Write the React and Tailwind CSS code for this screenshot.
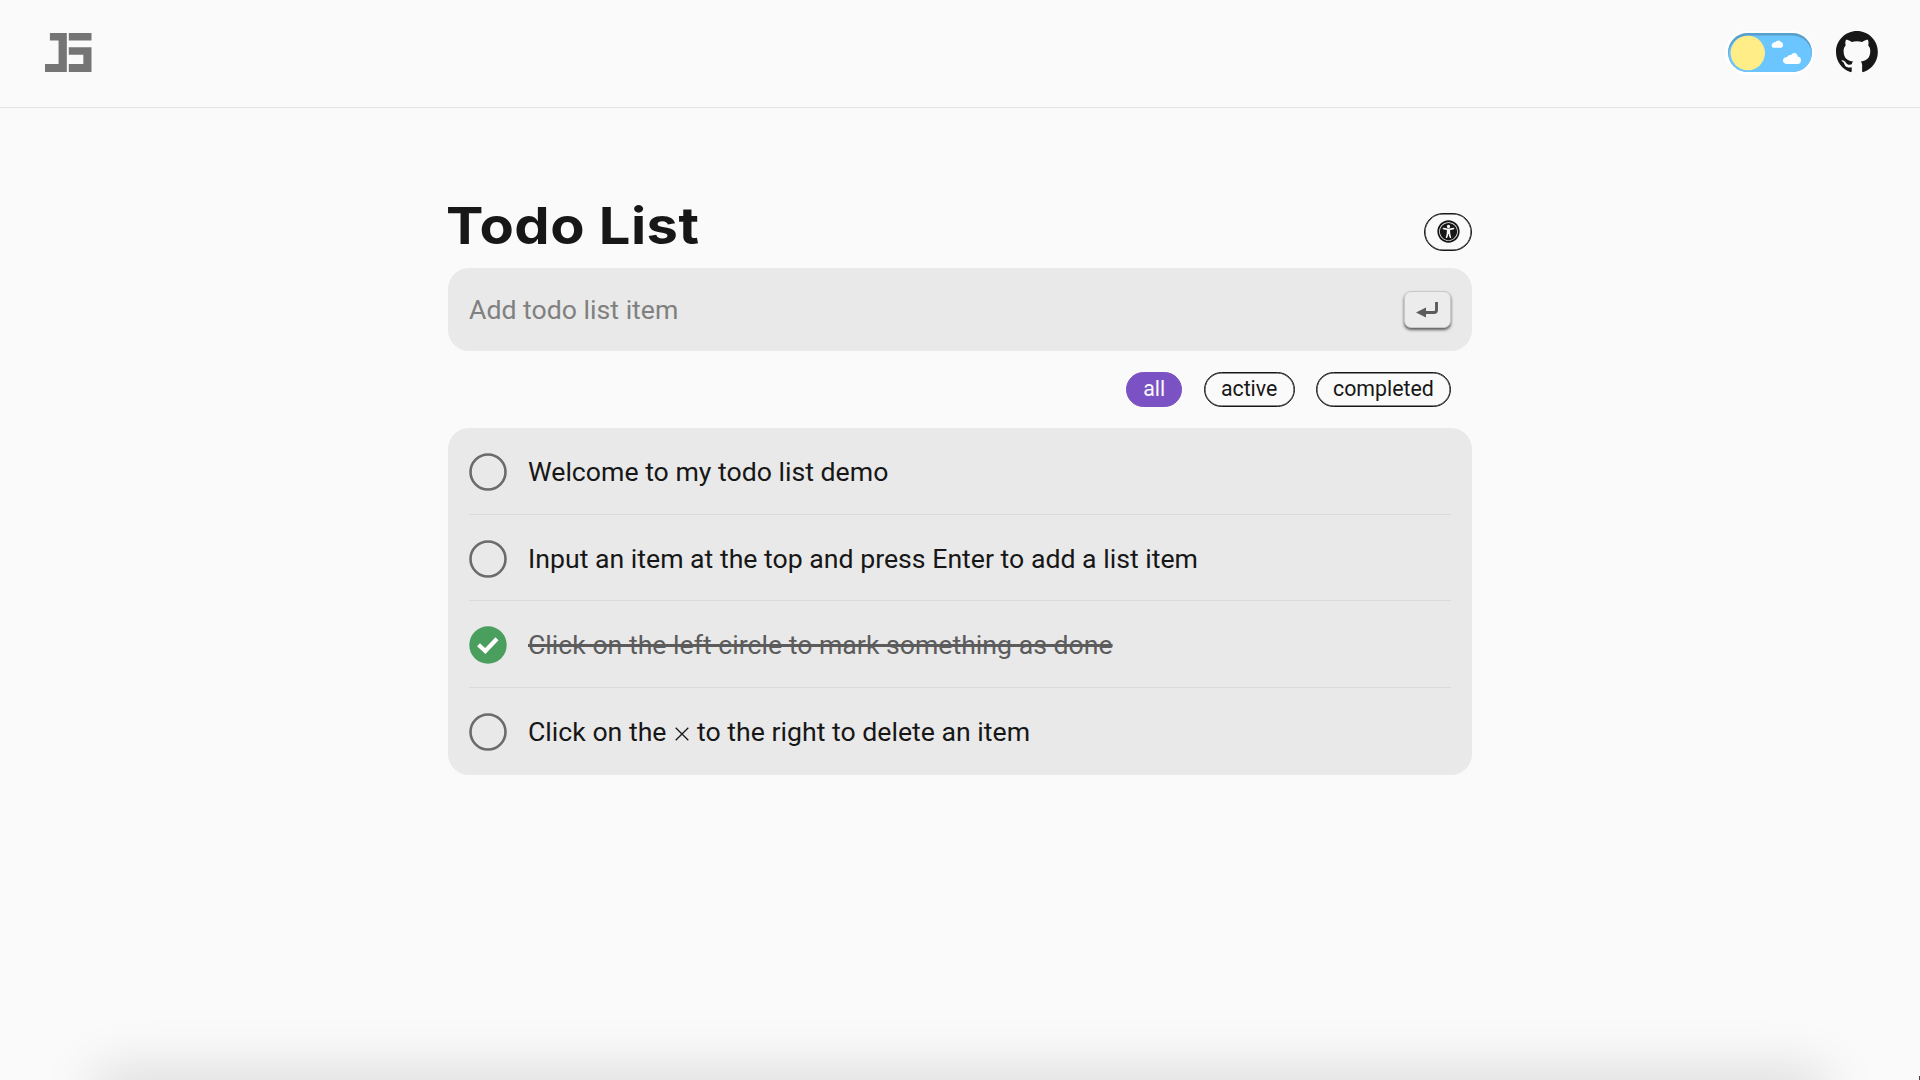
import { useState } from "react";
import { FaUniversalAccess } from "react-icons/fa";

const initialItems = [
  { id: 1, text: "Welcome to my todo list demo", done: false },
  { id: 2, text: "Input an item at the top and press Enter to add a list item", done: false },
  { id: 3, text: "Click on the left circle to mark something as done", done: true },
  { id: 4, text: "Click on the ", tail: " to the right to delete an item", done: false },
];

function Logo() {
  return (
    <svg className="-mt-[2px] h-[39px] w-[46.5px]" viewBox="0 0 47.3 39.6" preserveAspectRatio="none" fill="#757575">
      <path d="M5 0H22.2V39.6H0V31.6H13.8V7.5H5Z" />
      <path d="M24.2 0H47.3V7.5H24.2ZM24.2 14.5H47.3V39.6H24.2V31.6H39V22.2H24.2Z" />
    </svg>
  );
}

function ThemeSwitch() {
  return (
    <button aria-label="Toggle theme" className="-mt-[2px] block">
      <svg className="h-[46px] w-[90px]" viewBox="0 0 90 46">
        <defs>
          <clipPath id="track">
            <rect x="3" y="3" width="84" height="39" rx="19.5" />
          </clipPath>
        </defs>
        <rect x="0" y="1" width="89" height="44" rx="22" fill="#fff" />
        <g clipPath="url(#track)">
          <rect x="3" y="3" width="84" height="39" fill="#5a9fcb" />
          <rect x="3.3" y="5.4" width="83.7" height="42" rx="20" fill="#6bc5ff" />
        </g>
        <circle cx="22.8" cy="23" r="17.2" fill="#ffed87" />
        <path fill="#fff" d="M48.2 17.8a2.5 2.5 0 0 1 0-4.7c.8-.3 1.3 0 1.8-.5.6-1.1 1.7-.8 2.1-1.5 1.1-1.2 3.3-.7 3.6 1.2 1.5-.3 2.4.9 2.2 2.5.4 1.6-.5 3-1.9 3Z" />
        <path fill="#fff" d="M61.5 34c-4.6-.2-5-6.9 1-7.2.6-1.8 2.6-2 3.6-1.7 1.7-3.3 6.2-2.5 6.6 1.3 2.6.2 3.4 2 3.2 4.1 0 2.3-1.1 3.5-3.2 3.5Z" />
      </svg>
    </button>
  );
}

function GithubMark() {
  return (
    <svg className="h-[42px] w-[42px]" viewBox="0 0 98 98" fill="#171717">
      <path d="M48.854 0C21.839 0 0 22 0 49.217c0 21.756 13.993 40.172 33.405 46.69 2.427.49 3.316-1.059 3.316-2.362 0-1.141-.08-5.052-.08-9.127-13.59 2.934-16.42-5.867-16.42-5.867-2.184-5.704-5.42-7.17-5.42-7.17-4.448-3.015.324-3.015.324-3.015 4.934.326 7.523 5.052 7.523 5.052 4.367 7.496 11.404 5.378 14.235 4.074.404-3.178 1.699-5.378 3.074-6.6-10.839-1.141-22.243-5.378-22.243-24.283 0-5.378 1.94-9.778 5.014-13.2-.485-1.222-2.184-6.275.486-13.038 0 0 4.125-1.304 13.426 5.052a46.97 46.97 0 0 1 12.214-1.63c4.125 0 8.33.571 12.213 1.63 9.302-6.356 13.427-5.052 13.427-5.052 2.67 6.763.97 11.816.485 13.038 3.155 3.422 5.015 7.822 5.015 13.2 0 18.905-11.404 23.06-22.324 24.283 1.78 1.548 3.316 4.481 3.316 9.126 0 6.6-.08 11.897-.08 13.526 0 1.304.89 2.853 3.316 2.364 19.412-6.52 33.405-24.935 33.405-46.691C97.707 22 75.788 0 48.854 0z" />
    </svg>
  );
}

function EnterKey() {
  return (
    <span className="flex h-[37px] w-[47px] items-center justify-center rounded-[7px] border border-[#c9c9c9] bg-[#ececec] pr-[1px] shadow-[0_2px_3px_rgba(0,0,0,0.6)]">
      <svg className="h-[16px] w-[22px]" viewBox="0 0 22 16" fill="none">
        <path d="M0 10.5 10 5.5V15.5Z" fill="#5c5c5c" />
        <path d="M9 10.5H18Q20.5 10.5 20.5 8V0" stroke="#5c5c5c" strokeWidth="2.9" />
      </svg>
    </span>
  );
}

function Filter({ label, active, onClick }) {
  return (
    <button
      onClick={onClick}
      className={
        "flex h-[35px] items-center rounded-full border px-[16.2px] pb-[2px] text-[21.33px] leading-none " +
        (active
          ? "border-[#7b52c4] bg-[#7b52c4] text-[#fafafa]"
          : "border-[#171717] shadow-[inset_0_0_0_0.5px_#171717]")
      }
    >
      {label}
    </button>
  );
}

function Item({ item, onToggle }) {
  return (
    <li className="flex h-[86.7px] items-center gap-[21px] border-b-[1.5px] border-[#dadada] pt-[2px] last:border-b-0">
      <button aria-label="Toggle item" onClick={onToggle} className="shrink-0">
        <svg className="h-[38px] w-[38px]" viewBox="0 0 38 38" fill="none">
          {item.done ? (
            <>
              <circle cx="19" cy="19" r="18.7" fill="#4b9f5e" />
              <path d="M9.5 18.8 16.3 25 28 12.8" stroke="#fff" strokeWidth="4.2" />
            </>
          ) : (
            <circle cx="19" cy="19" r="17.5" stroke="#6b6b6b" strokeWidth="2.6" />
          )}
        </svg>
      </button>
      <span className={"whitespace-pre text-[26.67px] " + (item.done ? "text-[#5c5c5c] line-through decoration-[2.5px]" : "")}>
        {item.text}
        {item.tail && (
          <>
            <svg className="mx-[1.7px] inline-block h-[14px] w-[14px] align-[0px]" viewBox="0 0 14 14" stroke="#171717" strokeWidth="1.3">
              <path d="M.7.7 13.3 13.3M13.3.7.7 13.3" />
            </svg>
            {item.tail}
          </>
        )}
      </span>
    </li>
  );
}

export default function App() {
  const [items, setItems] = useState(initialItems);
  const [filter, setFilter] = useState("all");
  const visible = items.filter((i) => filter === "all" || (filter === "completed") === i.done);
  const toggle = (id) => setItems(items.map((i) => (i.id === id ? { ...i, done: !i.done } : i)));

  return (
    <div className="relative flex h-screen flex-col overflow-hidden bg-[#fafafa] font-['Roboto',sans-serif] text-[#171717]">
      <header className="flex h-[108px] shrink-0 items-center justify-between border-b border-[#e4e4e4] pr-[42px] pl-[45px]">
        <Logo />
        <div className="flex items-center gap-[21px]">
          <ThemeSwitch />
          <div className="-mt-[4px]">
            <GithubMark />
          </div>
        </div>
      </header>

      <main className="mx-auto flex w-[1024px] flex-1 flex-col pt-[85px]">
        <div className="flex h-[75px] items-start justify-between">
          <h1 className="mt-[1px] -ml-[2px] origin-left scale-x-[1.1] font-['Inter',sans-serif] text-[51px] leading-[64px] font-bold tracking-[0.4px]">
            Todo List
          </h1>
          <button
            aria-label="Accessibility"
            className="mt-[20px] flex h-[38px] w-[48px] items-center justify-center rounded-full border border-[#171717] pb-[2px] shadow-[inset_0_0_0_0.5px_#171717]"
          >
            <FaUniversalAccess className="h-[23px] w-[23px]" />
          </button>
        </div>
        <div className="flex h-[83px] items-center justify-between rounded-[21px] bg-[#e9e9e9] px-[21px]">
          <input
            className="flex-1 bg-transparent pt-[2px] text-[26.67px] outline-none placeholder:text-[#808080]"
            placeholder="Add todo list item"
          />
          <EnterKey />
        </div>
        <div className="flex h-[77px] items-center justify-end gap-[21.3px] pr-[21px]">
          {["all", "active", "completed"].map((f) => (
            <Filter key={f} label={f} active={filter === f} onClick={() => setFilter(f)} />
          ))}
        </div>
        <ul className="rounded-[21px] bg-[#e9e9e9] px-[21px]">
          {visible.map((item) => (
            <Item key={item.id} item={item} onToggle={() => toggle(item.id)} />
          ))}
        </ul>
      </main>

      <div className="mx-[115px] h-px shrink-0 translate-y-[14px] shadow-[0_0_54px_20px_rgba(0,0,0,0.15)]" />
      <div className="absolute right-0 bottom-0 h-[4px] w-px bg-[#444]" />
    </div>
  );
}
